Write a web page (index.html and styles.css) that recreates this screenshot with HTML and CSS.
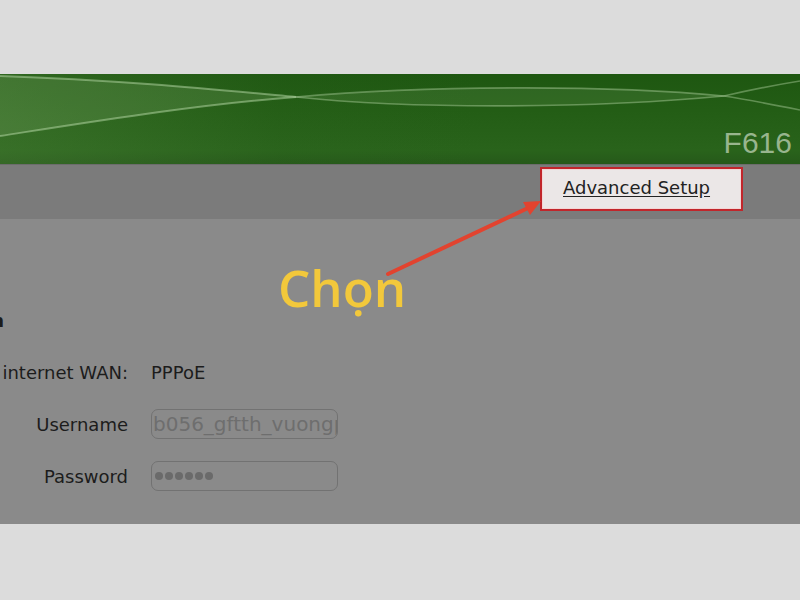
FILE: index.html
```html
<!DOCTYPE html>
<html lang="vi">
<head>
<meta charset="utf-8">
<title>F616 - Advanced Setup</title>
<link rel="stylesheet" href="styles.css">
</head>
<body>
<div class="page">
  <div class="top-gap"></div>
  <header class="banner">
    <svg class="waves" width="800" height="90" viewBox="0 0 800 90" aria-hidden="true">
      <path d="M0 2 C 120 6, 220 16, 296 23 C 200 30, 90 48, 0 62 Z" fill="rgba(190,225,170,0.13)"/>
      <path d="M0 2 C 120 6, 220 16, 296 23" fill="none" stroke="rgba(200,230,185,0.45)" stroke-width="2"/>
      <path d="M0 62 C 90 48, 200 30, 296 23" fill="none" stroke="rgba(200,230,185,0.45)" stroke-width="2"/>
      <path d="M296 23 C 420 12, 600 10, 724 22 C 600 34, 420 36, 296 23 Z" fill="rgba(190,225,170,0.1)"/>
      <path d="M296 23 C 420 12, 600 10, 724 22" fill="none" stroke="rgba(200,230,185,0.38)" stroke-width="1.6"/>
      <path d="M296 23 C 420 36, 600 34, 724 22" fill="none" stroke="rgba(200,230,185,0.38)" stroke-width="1.6"/>
      <path d="M724 22 C 750 16, 775 11, 800 7" fill="none" stroke="rgba(200,230,185,0.38)" stroke-width="1.6"/>
      <path d="M724 22 C 750 26, 775 31, 800 36" fill="none" stroke="rgba(200,230,185,0.38)" stroke-width="1.6"/>
    </svg>
    <span class="model">F616</span>
  </header>
  <nav class="navbar">
    <div class="nav-box"><a class="nav-link" href="#">Advanced Setup</a></div>
  </nav>
  <main class="content">
    <div class="form">
      <div class="label heading"><span>Thông tin</span></div>
      <div class="value"></div>
      <div class="label"><span>Kết nối internet WAN:</span></div>
      <div class="value">PPPoE</div>
      <div class="label"><span>Username</span></div>
      <div class="value"><div class="field"><span class="field-text">b056_gftth_vuongpt</span></div></div>
      <div class="label"><span>Password</span></div>
      <div class="value"><div class="field"><span class="dots"><i></i><i></i><i></i><i></i><i></i><i></i></span></div></div>
    </div>
  </main>
  <div class="bottom-gap"></div>

  <svg class="arrow" width="800" height="600" viewBox="0 0 800 600" aria-hidden="true">
    <line x1="388" y1="274" x2="528" y2="208" stroke="#e2432f" stroke-width="4" stroke-linecap="round"/>
    <polygon points="541,201 523,202 530,215" fill="#e2432f"/>
  </svg>
  <div class="callout">Chọn</div>
</div>
</body>
</html>
```
FILE: styles.css
```css
* { box-sizing: border-box; }
html, body { margin: 0; padding: 0; }
body {
  background: #dcdcdc;
  font-family: "DejaVu Sans", "Noto Sans", sans-serif;
}
.page {
  position: relative;
  width: 800px;
  height: 600px;
  overflow: hidden;
  display: flex;
  flex-direction: column;
}
.top-gap { height: 74px; background: #dcdcdc; }
.banner {
  position: relative;
  height: 90px;
  background: linear-gradient(180deg, #1e5711 0%, #235d15 40%, #29631b 85%, #26591a 100%);
  display: flex;
  justify-content: flex-end;
  align-items: flex-end;
  padding: 0 8px 6px 0;
}
.banner::before {
  content: "";
  position: absolute;
  inset: 0;
  background: linear-gradient(90deg, rgba(90,140,70,0.3) 0%, rgba(60,110,45,0.08) 35%, rgba(0,0,0,0) 60%);
}
.waves { position: absolute; left: 0; top: 0; }
.model {
  position: relative;
  font-family: "Liberation Sans", Arial, sans-serif;
  font-size: 30px;
  color: #98b58e;
  line-height: 1;
}
.navbar {
  height: 55px;
  background: #7b7b7b;
  display: flex;
  justify-content: flex-end;
  align-items: flex-start;
  padding: 2px 57px 0 0;
  border-top: 1px solid #6c6c6c;
}
.nav-box {
  width: 203px;
  height: 44px;
  border: 2px solid #c1262b;
  background: #ebe7e7;
  box-shadow: inset 0 0 0 1px #f3d6d6;
  display: flex;
  align-items: center;
  padding: 0 0 4px 21px;
}
.nav-link {
  font-size: 18px;
  color: #222;
  text-decoration: underline;
  text-underline-offset: 2px;
}
.content {
  height: 305px;
  background: #8a8a8a;
  padding-top: 75px;
}
.form {
  display: grid;
  grid-template-columns: 128px 1fr;
  grid-auto-rows: 52px;
  column-gap: 23px;
  font-size: 18px;
  color: #1c1c1c;
}
.label {
  display: flex;
  justify-content: flex-end;
  align-items: center;
  white-space: nowrap;
}
.heading { padding-right: 124px; font-weight: bold; }
.value { display: flex; align-items: center; }
.field {
  width: 187px;
  height: 30px;
  border: 1.5px solid #727272;
  border-radius: 7px;
  display: flex;
  align-items: center;
  padding-left: 1px;
  overflow: hidden;
  white-space: nowrap;
}
.field-text { color: #6e6e6e; font-size: 20px; }
.dots { display: flex; gap: 2px; padding-left: 2px; }
.dots i {
  width: 8px;
  height: 8px;
  border-radius: 50%;
  background: #6a6a6a;
  display: block;
}
.bottom-gap { flex: 1; background: #dcdcdc; }
.arrow { position: absolute; left: 0; top: 0; }
.callout {
  position: absolute;
  left: 278px;
  top: 257px;
  font-family: "Open Sans", "Noto Sans", sans-serif;
  font-weight: 600;
  font-size: 51px;
  line-height: 60px;
  color: #f2c83b;
}
```
